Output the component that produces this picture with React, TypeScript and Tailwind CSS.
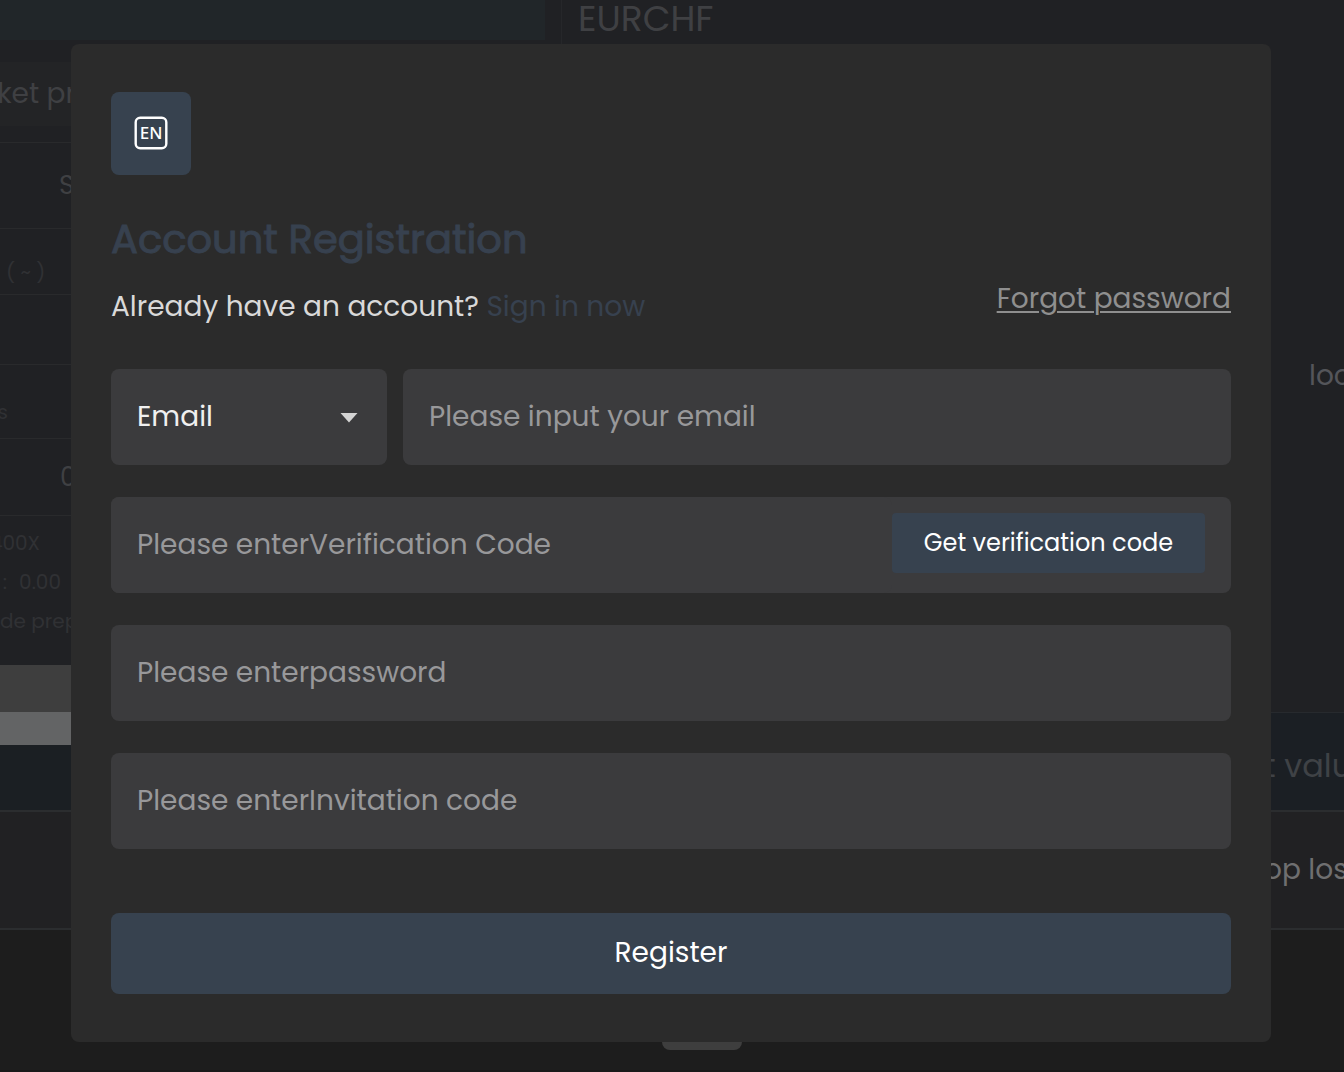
import { useState } from "react";

const fieldClass =
  "h-24 w-full min-w-0 rounded-lg bg-[#3b3b3d] px-[26px] text-[28px] text-[#f0f0f0] placeholder:text-[#98989a] outline-none";

const EnglishIcon = () => (
  <svg viewBox="0 0 34 34" className="size-[34px]" aria-hidden="true">
    <rect x="1.7" y="1.7" width="30.6" height="30.6" rx="4.5" fill="none" stroke="#fff" strokeWidth="2.4" />
    <text
      x="17"
      y="23"
      fill="#fff"
      textAnchor="middle"
      className="font-['Noto_Sans',sans-serif] text-[17px] font-medium"
    >
      EN
    </text>
  </svg>
);

// Order form and quotes that stay dimmed behind the dialog
function TradingPage() {
  return (
    <div aria-hidden="true" className="col-start-1 row-start-1 flex min-w-0 flex-col overflow-hidden whitespace-nowrap">
      <div className="flex">
        <div className="flex w-[562px] shrink-0 flex-col border-r border-[#26272a] text-[#3f4043]">
          <div className="mr-4 h-10 bg-[#212629]" />
          <div className="mt-[22px] flex h-16 items-center bg-[#232426] text-[28px]">
            <span className="flex w-[76px] justify-end">ket pr</span>
          </div>
          <div className="mt-4 flex h-[87px] items-center border-y border-[#292a2c] pl-[59px] text-[26px]">S</div>
          <div className="flex h-[66px] items-center border-b border-[#292a2c] pt-5 pl-1.5 text-xl text-[#303134]">
            ( ~ )
          </div>
          <div className="h-[70px] border-b border-[#292a2c]" />
          <div className="flex h-[74px] items-center border-b border-[#292a2c] pt-5 text-xl text-[#303134]">
            <span className="flex w-2 justify-end">s</span>
          </div>
          <div className="flex h-[77px] items-center border-b border-[#292a2c] pl-[60px] text-[26px]">0</div>
          <div className="flex h-[149px] flex-col pt-2 text-xl leading-[39px] text-[#303134]">
            <p className="flex w-10 justify-end">400X</p>
            <p className="flex w-[61px] justify-end gap-3">
              <span>:</span>
              <span>0.00</span>
            </p>
            <p>de prep</p>
          </div>
          <div className="h-[47px] bg-[#3e3e3e]" />
          <div className="h-[33px] bg-[#636465]" />
          <div className="h-[65px] bg-[#1b1f23]" />
        </div>
        <div className="flex min-w-0 flex-1 flex-col">
          <div className="h-[352px] pl-4 text-4xl leading-[38px] text-[#3f4043]">EURCHF</div>
          <div className="flex h-[360px] justify-end">
            <span className="w-[35px] text-[28px] leading-[48px] text-[#54555a]">loc</span>
          </div>
          <div className="flex flex-1 items-center justify-end border-t border-[#272a2e] bg-[#1b1f24] pt-2">
            <span className="w-20 text-[32px] text-[#3f4246]">t valu</span>
          </div>
        </div>
      </div>
      <div className="flex h-[120px] items-center justify-end border-y-2 border-[#2b2d2f] bg-[#212123]">
        <span className="w-20 text-[28px] text-[#6f6f70]">op los</span>
      </div>
      <div className="flex-1 border-b-2 border-[#191919] bg-[#1d1d1d]">
        <div className="ml-[662px] h-[120px] w-20 rounded-lg bg-[#3e3e3e]" />
      </div>
    </div>
  );
}

function RegisterDialog() {
  const [method, setMethod] = useState("email");

  return (
    <div className="z-10 col-start-1 row-start-1 pt-11 pr-[73px] pb-[30px] pl-[71px]">
      <form
        role="dialog"
        aria-labelledby="register-title"
        onSubmit={(e) => e.preventDefault()}
        className="flex flex-col rounded-lg bg-[#2b2b2b] px-10 py-12"
      >
        <button
          type="button"
          aria-label="Language"
          className="flex h-[83px] w-20 items-center justify-center rounded-lg bg-[#37424f] pb-0.5"
        >
          <EnglishIcon />
        </button>

        <h1
          id="register-title"
          className="mt-8 text-[40px] leading-[64px] font-normal text-[#37414f] [-webkit-text-stroke:1px]"
        >
          Account Registration
        </h1>
        <div className="mt-1 flex items-start justify-between text-[28px] leading-10 text-[#d9d9d9]">
          <p className="pt-3">
            Already have an account?{" "}
            <a href="#signin" className="text-[#37414f]">
              Sign in now
            </a>
          </p>
          <a href="#forgot" className="pt-1 text-[#8f8f8f] underline decoration-2 underline-offset-3">
            Forgot password
          </a>
        </div>

        <div className="mt-[42px] flex gap-4">
          <div className="grid w-[276px] shrink-0 items-center">
            <select
              aria-label="Registration method"
              value={method}
              onChange={(e) => setMethod(e.target.value)}
              className={`${fieldClass} col-start-1 row-start-1 appearance-none`}
            >
              <option value="email">Email</option>
              <option value="phone">Phone</option>
            </select>
            <svg
              viewBox="0 0 18 10"
              aria-hidden="true"
              className="pointer-events-none col-start-1 row-start-1 mt-0.5 mr-[29px] h-[10px] w-[18px] justify-self-end"
            >
              <path d="M0.5 0h17L9 9.5z" fill="#d4d4d4" />
            </svg>
          </div>
          <input type="email" aria-label="Email" placeholder="Please input your email" className={fieldClass} />
        </div>

        <div className="mt-8 flex h-24 items-center rounded-lg bg-[#3b3b3d] pr-[26px]">
          <input
            type="text"
            aria-label="Verification Code"
            placeholder="Please enterVerification Code"
            className={fieldClass}
          />
          <button type="button" className="mb-1 h-[60px] w-[313px] shrink-0 rounded bg-[#37424f] text-2xl text-white">
            Get verification code
          </button>
        </div>
        <input
          type="password"
          aria-label="Password"
          placeholder="Please enterpassword"
          className={`${fieldClass} mt-8`}
        />
        <input
          type="text"
          aria-label="Invitation code"
          placeholder="Please enterInvitation code"
          className={`${fieldClass} mt-8`}
        />

        <button type="submit" className="mt-16 h-[81px] rounded-lg bg-[#37424f] pb-0.5 text-[28px] text-white">
          Register
        </button>
      </form>
    </div>
  );
}

export default function App() {
  return (
    <main className="grid min-h-screen grid-cols-1 overflow-hidden bg-[#202124] font-['Poppins','Inter',sans-serif]">
      <TradingPage />
      <RegisterDialog />
    </main>
  );
}
